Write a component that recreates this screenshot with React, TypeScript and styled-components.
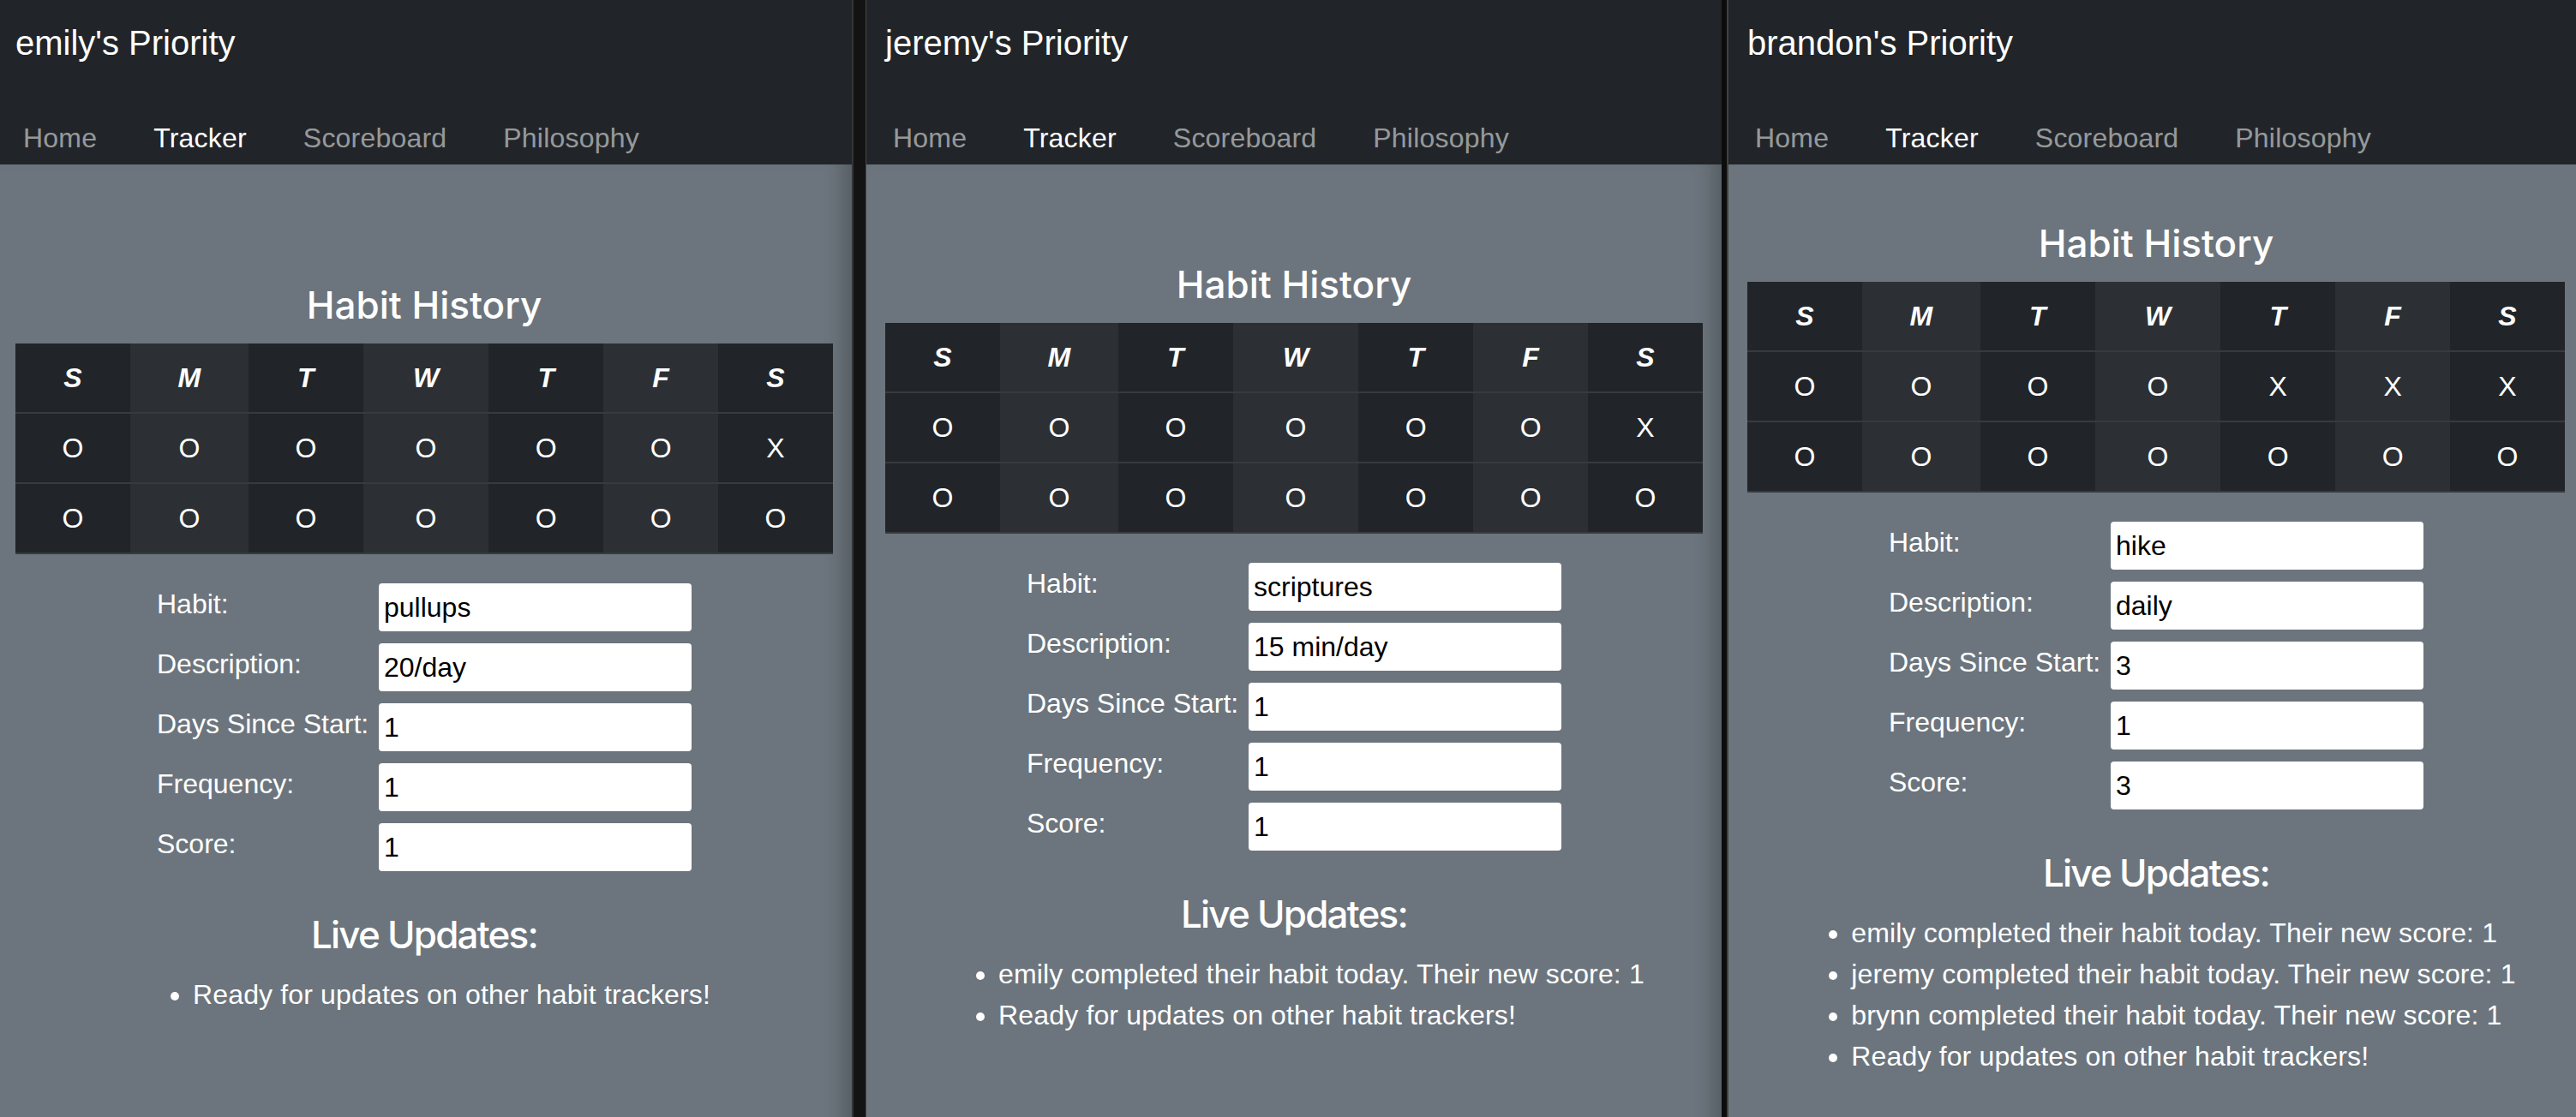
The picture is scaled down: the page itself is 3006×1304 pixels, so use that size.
import styled, { createGlobalStyle } from "styled-components";

const GlobalStyle = createGlobalStyle`
  html, body {
    margin: 0;
    padding: 0;
    overflow: hidden;
    background: #1b1d20;
  }
  * {
    box-sizing: border-box;
  }
`;

const Desktop = styled.div`
  display: flex;
  width: 3006px;
  height: 1304px;
  overflow: hidden;
`;

const Window = styled.div<{ $offset?: number }>`
  flex: 0 0 998px;
  height: 1323px;
  margin-left: ${(p) => p.$offset ?? 0}px;
  display: flex;
  flex-direction: column;
  font-family: "Liberation Sans", Arial, sans-serif;
  color: #fff;
`;

const Divider = styled.div<{ $wide?: boolean }>`
  flex: 0 0 ${(p) => (p.$wide ? 17 : 8)}px;
  background: ${(p) => (p.$wide ? "#131313" : "#0c0c0c")};
  border-left: ${(p) => (p.$wide ? "2px solid rgba(255,255,255,0.14)" : "none")};
  border-right: ${(p) => (p.$wide ? 1 : 2)}px solid rgba(255, 255, 255, 0.22);
`;

const Navbar = styled.header`
  height: 192px;
  flex-shrink: 0;
  background: #212529;
  padding-top: 20px;
`;

const Brand = styled.div`
  height: 60px;
  padding-left: 22px;
  font-size: 40px;
  line-height: 60px;
  color: #fff;
`;

const NavList = styled.nav`
  display: flex;
  gap: 66px;
  margin-top: 57px;
  padding-left: 31px;
  height: 48px;
`;

const NavLink = styled.a<{ $active?: boolean }>`
  font-size: 32px;
  line-height: 48px;
  letter-spacing: 0.2px;
  text-decoration: none;
  color: ${(p) => (p.$active ? "#fff" : "rgba(255, 255, 255, 0.55)")};
`;

const Main = styled.main<{ $shade?: boolean }>`
  height: 1131px;
  background: #6c757d;
  display: flex;
  flex-direction: column;
  align-items: center;
  justify-content: center;
  padding: 0 22px;
  box-shadow: ${(p) =>
    p.$shade ? "inset -26px 0 22px -16px rgba(0, 0, 0, 0.22)" : "none"};
`;

const Heading = styled.h3<{ $gap: number; $top?: number; $tight?: boolean }>`
  margin: ${(p) => p.$top ?? 0}px 0 ${(p) => p.$gap}px;
  font-family: Inter, "Liberation Sans", sans-serif;
  font-size: 44px;
  font-weight: 500;
  line-height: 1.2;
  letter-spacing: ${(p) => (p.$tight ? "-1.8px" : "0")};
  color: #fff;
`;

const Table = styled.table`
  width: 100%;
  border-collapse: collapse;
  color: #fff;
`;

const HeadCell = styled.th`
  padding: 16px;
  font-size: 32px;
  line-height: 48px;
  font-weight: 700;
  font-style: italic;
  text-align: center;
  background: #212529;
  border-bottom: 2px solid #373b3e;

  &:nth-child(even) {
    background: #2c3034;
  }
`;

const Cell = styled.td`
  padding: 16px;
  font-size: 32px;
  line-height: 48px;
  text-align: center;
  background: #212529;
  border-bottom: 2px solid #373b3e;

  &:nth-child(even) {
    background: #2c3034;
  }
`;

const Form = styled.form`
  display: grid;
  grid-template-columns: 259px 365px;
  row-gap: 14px;
  align-items: start;
  margin-top: 34px;
`;

const Label = styled.label`
  font-size: 32px;
  line-height: 48px;
  white-space: nowrap;
  color: #fff;
`;

const Field = styled.input`
  width: 365px;
  height: 56px;
  padding: 0 6px;
  border: none;
  border-radius: 4px;
  background: #fff;
  color: #000;
  font-family: "Liberation Sans", Arial, sans-serif;
  font-size: 32px;
  outline: none;
`;

const Updates = styled.ul`
  margin: 0;
  padding-left: 64px;
  font-size: 32px;
  line-height: 48px;
  letter-spacing: 0.15px;
  text-align: left;
`;

const days = ["S", "M", "T", "W", "T", "F", "S"];

type Tracker = {
  name: string;
  history: string[][];
  habit: string[];
  updates: string[];
};

const trackers: Tracker[] = [
  {
    name: "emily",
    history: ["OOOOOOX".split(""), "OOOOOOO".split("")],
    habit: ["pullups", "20/day", "1", "1", "1"],
    updates: ["Ready for updates on other habit trackers!"],
  },
  {
    name: "jeremy",
    history: ["OOOOOOX".split(""), "OOOOOOO".split("")],
    habit: ["scriptures", "15 min/day", "1", "1", "1"],
    updates: [
      "emily completed their habit today. Their new score: 1",
      "Ready for updates on other habit trackers!",
    ],
  },
  {
    name: "brandon",
    history: ["OOOOXXX".split(""), "OOOOOOO".split("")],
    habit: ["hike", "daily", "3", "1", "3"],
    updates: [
      "emily completed their habit today. Their new score: 1",
      "jeremy completed their habit today. Their new score: 1",
      "brynn completed their habit today. Their new score: 1",
      "Ready for updates on other habit trackers!",
    ],
  },
];

const fieldNames = ["Habit:", "Description:", "Days Since Start:", "Frequency:", "Score:"];

function TrackerWindow({ data, shade, offset }: { data: Tracker; shade?: boolean; offset?: number }) {
  return (
    <Window $offset={offset}>
      <Navbar>
        <Brand>{data.name}'s Priority</Brand>
        <NavList>
          <NavLink href="#">Home</NavLink>
          <NavLink href="#" $active>
            Tracker
          </NavLink>
          <NavLink href="#">Scoreboard</NavLink>
          <NavLink href="#">Philosophy</NavLink>
        </NavList>
      </Navbar>
      <Main $shade={shade}>
        <Heading $gap={18}>Habit History</Heading>
        <Table>
          <thead>
            <tr>
              {days.map((d, i) => (
                <HeadCell key={i}>{d}</HeadCell>
              ))}
            </tr>
          </thead>
          <tbody>
            {data.history.map((row, r) => (
              <tr key={r}>
                {row.map((v, i) => (
                  <Cell key={i}>{v}</Cell>
                ))}
              </tr>
            ))}
          </tbody>
        </Table>
        <Form onSubmit={(e) => e.preventDefault()}>
          {fieldNames.flatMap((label, i) => [
            <Label key={"l" + i}>{label}</Label>,
            <Field key={"f" + i} defaultValue={data.habit[i]} />,
          ])}
        </Form>
        <Heading $top={48} $gap={19} $tight>
          Live Updates:
        </Heading>
        <Updates>
          {data.updates.map((u, i) => (
            <li key={i}>{u}</li>
          ))}
        </Updates>
      </Main>
    </Window>
  );
}

export default function App() {
  return (
    <>
      <GlobalStyle />
      <Desktop>
        <TrackerWindow data={trackers[0]} shade offset={-4} />
        <Divider $wide />
        <TrackerWindow data={trackers[1]} shade />
        <Divider />
        <TrackerWindow data={trackers[2]} />
      </Desktop>
    </>
  );
}
